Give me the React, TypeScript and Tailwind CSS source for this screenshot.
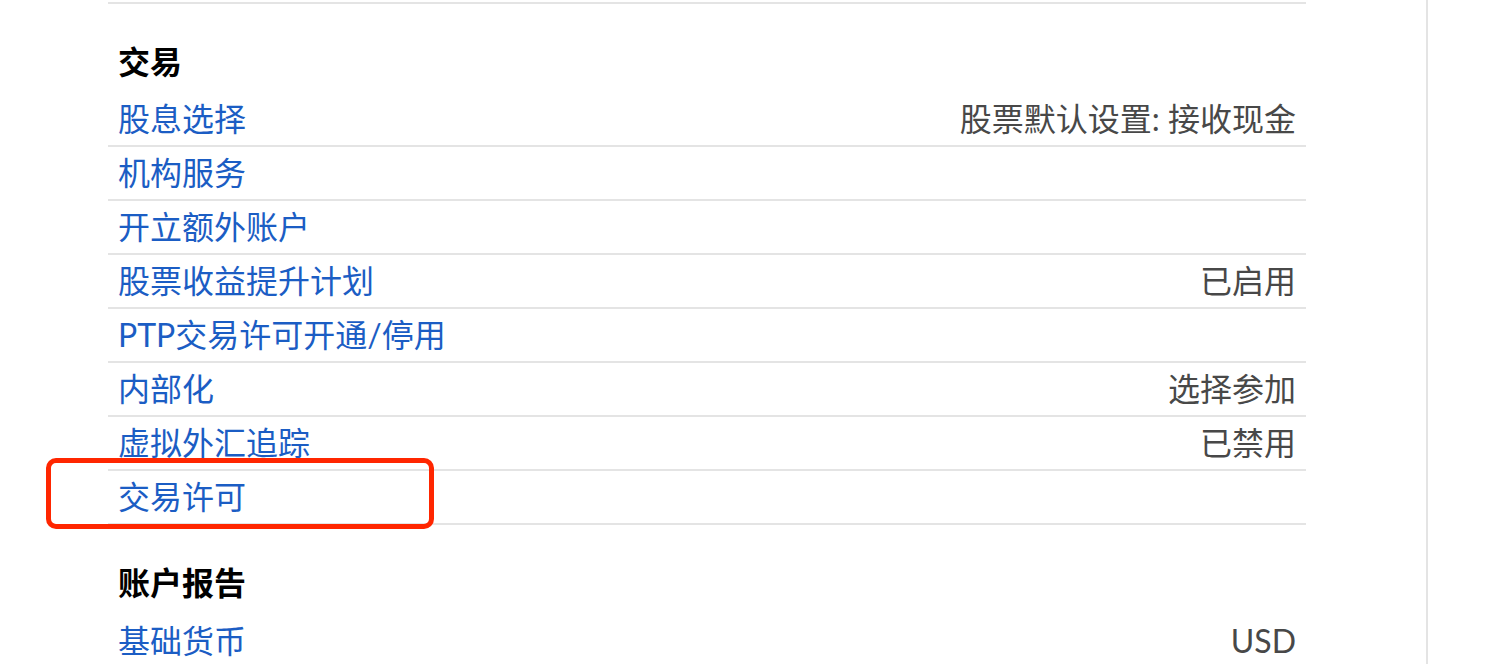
const font = "font-['Lato','Noto_Sans_CJK_SC',sans-serif]"

type Row = { label: string; value?: string; highlight?: boolean }

const trading: Row[] = [
  { label: '股息选择', value: '股票默认设置: 接收现金' },
  { label: '机构服务' },
  { label: '开立额外账户' },
  { label: '股票收益提升计划', value: '已启用' },
  { label: 'PTP交易许可开通/停用' },
  { label: '内部化', value: '选择参加' },
  { label: '虚拟外汇追踪', value: '已禁用' },
  { label: '交易许可', highlight: true },
]

const reports: Row[] = [{ label: '基础货币', value: 'USD' }]

function SectionTitle({ children }: { children: string }) {
  return (
    <div className="px-[10px] pt-[40px] pb-[13px]">
      <div className="text-[32px] leading-[36px] font-bold text-black">{children}</div>
    </div>
  )
}

function SettingRow({ row, last }: { row: Row; last?: boolean }) {
  return (
    <div className={`relative flex h-[54px] items-center justify-between px-[10px] ${last ? '' : 'border-b-2 border-[#e4e4e4]'}`}>
      <a className="text-[32px] leading-[36px] text-[#1b5dc4] cursor-pointer">{row.label}</a>
      {row.value && <span className="text-[32px] leading-[36px] text-[#484848]">{row.value}</span>}
      {row.highlight && (
        <div className="pointer-events-none absolute left-[-62px] top-[-13px] h-[71px] w-[388px] rounded-[10px] border-[5px] border-[#ff2600]" />
      )}
    </div>
  )
}

export default function App() {
  return (
    <div className={`flex h-[664px] w-[1494px] overflow-hidden bg-white ${font}`}>
      <div className="w-[108px] shrink-0" />
      <div className="w-[1198px] shrink-0">
        <div className="mt-[2px] border-t-2 border-[#e4e4e4]" />
        <SectionTitle>交易</SectionTitle>
        <div className="flex flex-col">
          {trading.map((r) => (
            <SettingRow key={r.label} row={r} />
          ))}
        </div>
        <SectionTitle>账户报告</SectionTitle>
        <div className="flex flex-col">
          {reports.map((r) => (
            <SettingRow key={r.label} row={r} last />
          ))}
        </div>
      </div>
      <div className="w-[120px] shrink-0" />
      <div className="w-[2px] shrink-0 bg-[#e4e4e4]" />
      <div className="flex-1" />
    </div>
  )
}
